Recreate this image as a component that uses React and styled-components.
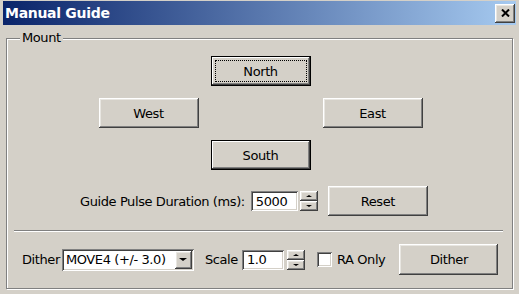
import React, { useState } from 'react';
import styled, { createGlobalStyle } from 'styled-components';

const Global = createGlobalStyle`
  html, body {
    margin: 0;
    padding: 0;
    background: #d4d0c8;
  }
  body {
    font-family: "DejaVu Sans", Verdana, sans-serif;
    font-size: 13px;
    letter-spacing: -0.4px;
    color: #000;
  }
`;

const raised = `
  box-shadow: inset -1px -1px #404040, inset 1px 1px #ffffff,
    inset -2px -2px #808080, inset 2px 2px #e8e6e1;
`;

const sunken = `
  box-shadow: inset 1px 1px #808080, inset -1px -1px #ffffff,
    inset 2px 2px #404040, inset -2px -2px #d4d0c8;
`;

const Window = styled.div`
  width: 519px;
  height: 294px;
  box-sizing: border-box;
  background: #d4d0c8;
  padding-top: 1px;
  display: flex;
  flex-direction: column;
`;

const TitleBar = styled.div`
  height: 24px;
  margin: 0 3px;
  display: flex;
  align-items: center;
  justify-content: space-between;
  padding: 0 1px 0 2px;
  background: linear-gradient(to right, #0a246a, #a6caf0);
`;

const Title = styled.span`
  color: #fff;
  font-weight: bold;
  font-size: 14px;
  letter-spacing: -0.3px;
`;

const CloseBtn = styled.div`
  width: 20px;
  height: 19px;
  background: #d4d0c8;
  display: flex;
  align-items: center;
  justify-content: center;
  ${raised}
`;

const Group = styled.fieldset`
  margin: 6px 6px 0;
  padding: 0 5px 0 7px;
  height: 258px;
  box-sizing: border-box;
  border: 1px solid #808080;
  box-shadow: inset 1px 1px #fff, 1px 1px #fff;
  display: flex;
  flex-direction: column;
  min-width: 0;
`;

const Legend = styled.legend`
  margin-left: 6px;
  padding: 0 2px;
  line-height: 14px;
  background: #d4d0c8;
`;

const Compass = styled.div`
  margin-top: 11px;
  display: grid;
  grid-template-columns: 100px 100px 100px;
  grid-template-rows: 30px 30px 30px;
  column-gap: 12px;
  row-gap: 12px;
  justify-content: center;
`;

const Button = styled.div`
  position: relative;
  box-sizing: border-box;
  width: ${(p) => p.$w || 100}px;
  height: ${(p) => p.$h || 30}px;
  display: flex;
  align-items: center;
  justify-content: center;
  background: #d4d0c8;
  grid-column: ${(p) => p.$col || 'auto'};
  grid-row: ${(p) => p.$row || 'auto'};
  ${(p) =>
    p.$default
      ? `box-shadow: inset 0 0 0 1px #000, inset -2px -2px #404040, inset 2px 2px #ffffff,
    inset -3px -3px #808080;`
      : raised}
`;

const Focus = styled.div`
  position: absolute;
  inset: 4px;
  border: 1px dotted #000;
`;

const Row = styled.div`
  display: flex;
  align-items: center;
  margin-top: ${(p) => p.$top}px;
  padding-left: ${(p) => p.$left}px;
`;

const Label = styled.span`
  margin-right: ${(p) => p.$gap || 0}px;
  white-space: nowrap;
`;

const TextBox = styled.div`
  box-sizing: border-box;
  width: ${(p) => p.$w}px;
  height: 20px;
  background: #fff;
  display: flex;
  align-items: center;
  padding-left: 5px;
  ${sunken}
`;

const SpinWrap = styled.div`
  display: flex;
  flex-direction: column;
  margin-left: ${(p) => p.$left || 2}px;
  margin-right: ${(p) => p.$gap || 0}px;
`;

const SpinHalf = styled.div`
  width: 18px;
  height: 10px;
  box-sizing: border-box;
  background: #d4d0c8;
  display: flex;
  align-items: center;
  justify-content: center;
  ${raised}
`;

const Arrow = styled.div`
  width: 0;
  height: 0;
  border-left: ${(p) => p.$s}px solid transparent;
  border-right: ${(p) => p.$s}px solid transparent;
  ${(p) =>
    p.$up
      ? `border-bottom: ${p.$s - 1}px solid #000;`
      : `border-top: ${p.$s - 1}px solid #000;`}
`;

const Separator = styled.div`
  margin: 14px 4px 0 0;
  height: 1px;
  background: #808080;
  border-bottom: 1px solid #fff;
`;

const Select = styled.div`
  box-sizing: border-box;
  width: 132px;
  height: 22px;
  background: #fff;
  display: flex;
  align-items: center;
  justify-content: space-between;
  padding: 2px 2px 2px 4px;
  margin-right: 11px;
  ${sunken}
`;

const DropBtn = styled.div`
  width: 17px;
  height: 18px;
  box-sizing: border-box;
  background: #d4d0c8;
  display: flex;
  align-items: center;
  justify-content: center;
  ${raised}
`;

const Check = styled.div`
  box-sizing: border-box;
  width: 15px;
  height: 15px;
  background: #fff;
  margin-right: 5px;
  ${sunken}
`;

const Spinner = ({ left, gap }) => (
  <SpinWrap $left={left} $gap={gap}>
    <SpinHalf>
      <Arrow $up $s={3} />
    </SpinHalf>
    <SpinHalf>
      <Arrow $s={3} />
    </SpinHalf>
  </SpinWrap>
);

export default function App() {
  const [pulse] = useState('5000');
  return (
    <>
      <Global />
      <Window>
        <TitleBar>
          <Title>Manual Guide</Title>
          <CloseBtn>
            <svg width="9" height="8" viewBox="0 0 9 8">
              <path d="M1 0.5 L8 7.5 M8 0.5 L1 7.5" stroke="#000" strokeWidth="2" />
            </svg>
          </CloseBtn>
        </TitleBar>
        <Group>
          <Legend>Mount</Legend>
          <Compass>
            <Button $default $col={2} $row={1}>
              <Focus />
              North
            </Button>
            <Button $col={1} $row={2}>West</Button>
            <Button $col={3} $row={2}>East</Button>
            <Button $default $col={2} $row={3}>South</Button>
          </Compass>
          <Row $top={16} $left={66}>
            <Label $gap={6}>Guide Pulse Duration (ms):</Label>
            <TextBox $w={47}>{pulse}</TextBox>
            <Spinner gap={10} />
            <Button>Reset</Button>
          </Row>
          <Separator />
          <Row $top={12} $left={8}>
            <Label $gap={2}>Dither</Label>
            <Select>
              <span>MOVE4 (+/- 3.0)</span>
              <DropBtn>
                <Arrow $s={4} />
              </DropBtn>
            </Select>
            <Label $gap={4}>Scale</Label>
            <TextBox $w={42}>1.0</TextBox>
            <Spinner left={3} gap={12} />
            <Check />
            <Label $gap={14}>RA Only</Label>
            <Button $w={99} $h={31}>Dither</Button>
          </Row>
        </Group>
      </Window>
    </>
  );
}
